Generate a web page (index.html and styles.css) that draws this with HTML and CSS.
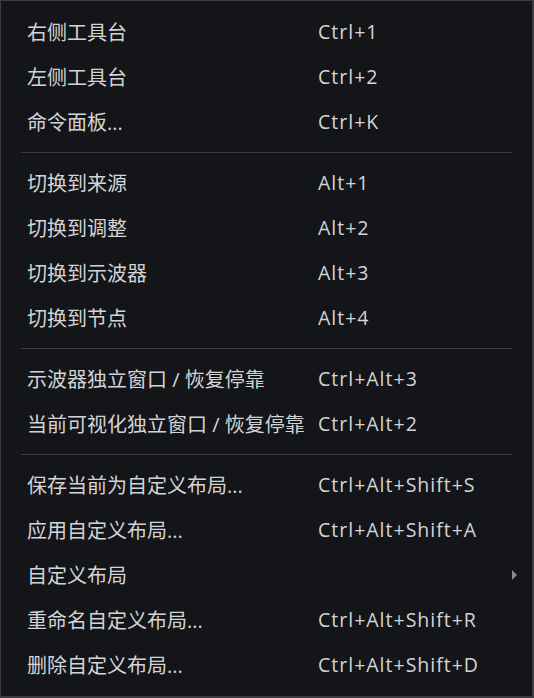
FILE: index.html
```html
<!DOCTYPE html>
<html lang="zh-CN">
<head>
<meta charset="utf-8">
<link rel="stylesheet" href="styles.css">
</head>
<body>
<div class="menu">
  <div class="item"><span class="label">右侧工具台</span><span class="key">Ctrl+1</span></div>
  <div class="item"><span class="label">左侧工具台</span><span class="key">Ctrl+2</span></div>
  <div class="item"><span class="label">命令面板...</span><span class="key">Ctrl+K</span></div>
  <div class="sep"></div>
  <div class="item"><span class="label">切换到来源</span><span class="key">Alt+1</span></div>
  <div class="item"><span class="label">切换到调整</span><span class="key">Alt+2</span></div>
  <div class="item"><span class="label">切换到示波器</span><span class="key">Alt+3</span></div>
  <div class="item"><span class="label">切换到节点</span><span class="key">Alt+4</span></div>
  <div class="sep"></div>
  <div class="item"><span class="label">示波器独立窗口 / 恢复停靠</span><span class="key">Ctrl+Alt+3</span></div>
  <div class="item"><span class="label">当前可视化独立窗口 / 恢复停靠</span><span class="key">Ctrl+Alt+2</span></div>
  <div class="sep"></div>
  <div class="item"><span class="label">保存当前为自定义布局...</span><span class="key">Ctrl+Alt+Shift+S</span></div>
  <div class="item"><span class="label">应用自定义布局...</span><span class="key">Ctrl+Alt+Shift+A</span></div>
  <div class="item"><span class="label">自定义布局</span><span class="key"></span><span class="arrow"></span></div>
  <div class="item"><span class="label">重命名自定义布局...</span><span class="key">Ctrl+Alt+Shift+R</span></div>
  <div class="item"><span class="label">删除自定义布局...</span><span class="key">Ctrl+Alt+Shift+D</span></div>
</div>
</body>
</html>
```
FILE: styles.css
```css
html, body {
  margin: 0;
  padding: 0;
  background: #141518;
}
.menu {
  box-sizing: border-box;
  width: 534px;
  height: 698px;
  border: 1px solid #3a3a3f;
  border-right-width: 2px;
  border-bottom-width: 2px;
  background: #141518;
  padding: 8px 0 8px 0;
  display: flex;
  flex-direction: column;
  font-family: "Open Sans", "Noto Sans CJK SC", sans-serif;
  color: #d3d4d6;
}
.item {
  height: 45px;
  display: grid;
  grid-template-columns: 291px 1fr 10px;
  align-items: center;
  padding: 0 15px 0 26px;
  white-space: nowrap;
}
.label {
  font-size: 20px;
  letter-spacing: 0;
}
.key {
  font-size: 19.5px;
  letter-spacing: 1px;
}
.sep {
  height: 1px;
  margin: 8px 20px 7px 20px;
  background: #3a3a3c;
}
.arrow {
  width: 0;
  height: 0;
  border-top: 5px solid transparent;
  border-bottom: 5px solid transparent;
  border-left: 5px solid #8a8a8c;
  justify-self: end;
}
```
